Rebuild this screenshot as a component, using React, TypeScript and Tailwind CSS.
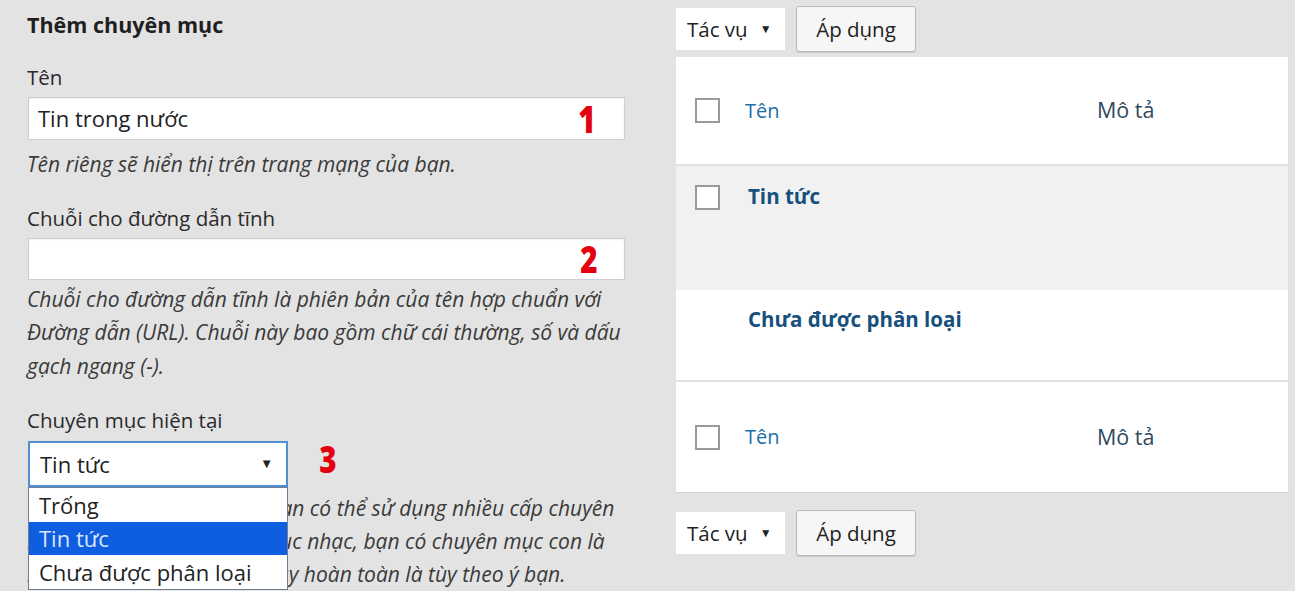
import React from "react";

const font = { fontFamily: '"Open Sans", "Noto Sans", sans-serif' };

function Checkbox() {
  return <div className="w-[25px] h-[25px] shrink-0 border-2 border-[#9a9a9a] bg-white" />;
}

function BulkActions() {
  return (
    <div className="flex items-center gap-[11px]">
      <div className="w-[109px] h-[42px] bg-white flex items-center pl-[11px] text-[20.5px] text-[#222]">
        <span>Tác vụ</span>
        <span className="ml-[12px] text-[12px]">▼</span>
      </div>
      <div className="w-[120px] h-[46px] bg-[#f6f6f6] border border-[#b8b8b8] rounded-[3px] shadow-[0_1px_0_#ccc] flex items-center justify-center text-[20.5px] text-[#222]">
        Áp dụng
      </div>
    </div>
  );
}

function Marker({ n }: { n: string }) {
  return (
    <span className="text-[#e4000f] font-black text-[37px] leading-none scale-x-[0.8] inline-block">
      {n}
    </span>
  );
}

export default function App() {
  return (
    <div
      style={font}
      className="w-[1295px] h-[591px] bg-[#e3e3e3] overflow-hidden flex text-[#2a2a2a]"
    >
      {/* add-category form */}
      <div className="w-[625px] shrink-0 pl-[27px] pt-[11px] flex flex-col">
        <h2 className="text-[21.5px] font-bold leading-[28px] text-[#1f1f1f]">Thêm chuyên mục</h2>

        <label className="mt-[26px] text-[20.5px] leading-[24px]">Tên</label>
        <div className="mt-[8px] ml-[1px] h-[44px] bg-white border border-[#cfcfcf] shadow-[inset_0_1px_2px_rgba(0,0,0,0.07)] flex items-center justify-between pl-[9px] pr-[26px]">
          <span className="text-[22px] text-[#222]">Tin trong nước</span>
          <Marker n="1" />
        </div>
        <p className="mt-[12px] text-[21px] italic leading-[24px] text-[#3a3a3a]">
          Tên riêng sẽ hiển thị trên trang mạng của bạn.
        </p>

        <label className="mt-[30px] text-[20.5px] leading-[24px]">Chuỗi cho đường dẫn tĩnh</label>
        <div className="mt-[8px] ml-[1px] h-[43px] bg-white border border-[#cfcfcf] shadow-[inset_0_1px_2px_rgba(0,0,0,0.07)] flex items-center justify-end pr-[24px]">
          <Marker n="2" />
        </div>
        <p className="mt-[3px] text-[21px] italic leading-[33.5px] text-[#3a3a3a] whitespace-nowrap">
          Chuỗi cho đường dẫn tĩnh là phiên bản của tên hợp chuẩn với
          <br />
          Đường dẫn (URL). Chuỗi này bao gồm chữ cái thường, số và dấu
          <br />
          gạch ngang (-).
        </p>

        <label className="mt-[25px] text-[20.5px] leading-[24px]">Chuyên mục hiện tại</label>
        <div className="mt-[9px] flex items-start gap-[29px]">
          <div className="relative ml-[1px]">
            <div className="w-[260px] h-[46px] bg-white border-2 border-[#4f8fd4] flex items-center justify-between pl-[10px] pr-[13px]">
              <span className="text-[22px] text-[#222]">Tin tức</span>
              <span className="text-[13px] text-[#222]">▼</span>
            </div>
            {/* open option list */}
            <div className="absolute left-0 top-full w-[260px] bg-white border border-[#6f7f93] text-[22px] z-10">
              <div className="h-[34px] flex items-center pl-[10px] text-[#222]">Trống</div>
              <div className="h-[33px] flex items-center pl-[10px] bg-[#0f5ee0] text-[#d9e6ff]">Tin tức</div>
              <div className="h-[34px] flex items-center pl-[10px] text-[#222]">Chưa được phân loại</div>
            </div>
          </div>
          <div className="-mt-[1px]">
            <Marker n="3" />
          </div>
        </div>
        <p className="mt-[5px] text-[21px] italic leading-[33px] text-[#3a3a3a] whitespace-nowrap">
          Chuyên mục khác với thẻ, bạn có thể sử dụng nhiều cấp chuyên
          <br />
          mục. Ví dụ: trong chuyên mục nhạc, bạn có chuyên mục con là
          <br />
          nhạc Pop, nhạc Jazz. Việc này hoàn toàn là tùy theo ý bạn.
        </p>
      </div>

      {/* category list */}
      <div className="ml-[51px] w-[612px] shrink-0 pt-[6px] flex flex-col">
        <BulkActions />

        <div className="mt-[5px] bg-white shadow-[0_1px_1px_rgba(0,0,0,0.06)]">
          <div className="h-[109px] flex items-center pl-[19px] border-b-2 border-[#e2e2e2]">
            <Checkbox />
            <span className="ml-[25px] w-[352px] text-[20px] text-[#1b6fa8]">Tên</span>
            <span className="text-[21.5px] text-[#2f4a60]">Mô tả</span>
          </div>
          <div className="h-[124px] bg-[#f1f1f1] flex items-start pl-[19px] pt-[19px]">
            <Checkbox />
            <span className="ml-[28px] -mt-[4px] text-[20.5px] font-bold text-[#17507c]">Tin tức</span>
          </div>
          <div className="h-[92px] flex items-start pl-[72px] pt-[14px] border-b-2 border-[#e2e2e2]">
            <span className="text-[20.5px] font-bold text-[#17507c]">Chưa được phân loại</span>
          </div>
          <div className="h-[110px] flex items-center pl-[19px]">
            <Checkbox />
            <span className="ml-[25px] w-[352px] text-[20px] text-[#1b6fa8]">Tên</span>
            <span className="text-[21.5px] text-[#2f4a60]">Mô tả</span>
          </div>
        </div>

        <div className="mt-[18px]">
          <BulkActions />
        </div>
      </div>
    </div>
  );
}
